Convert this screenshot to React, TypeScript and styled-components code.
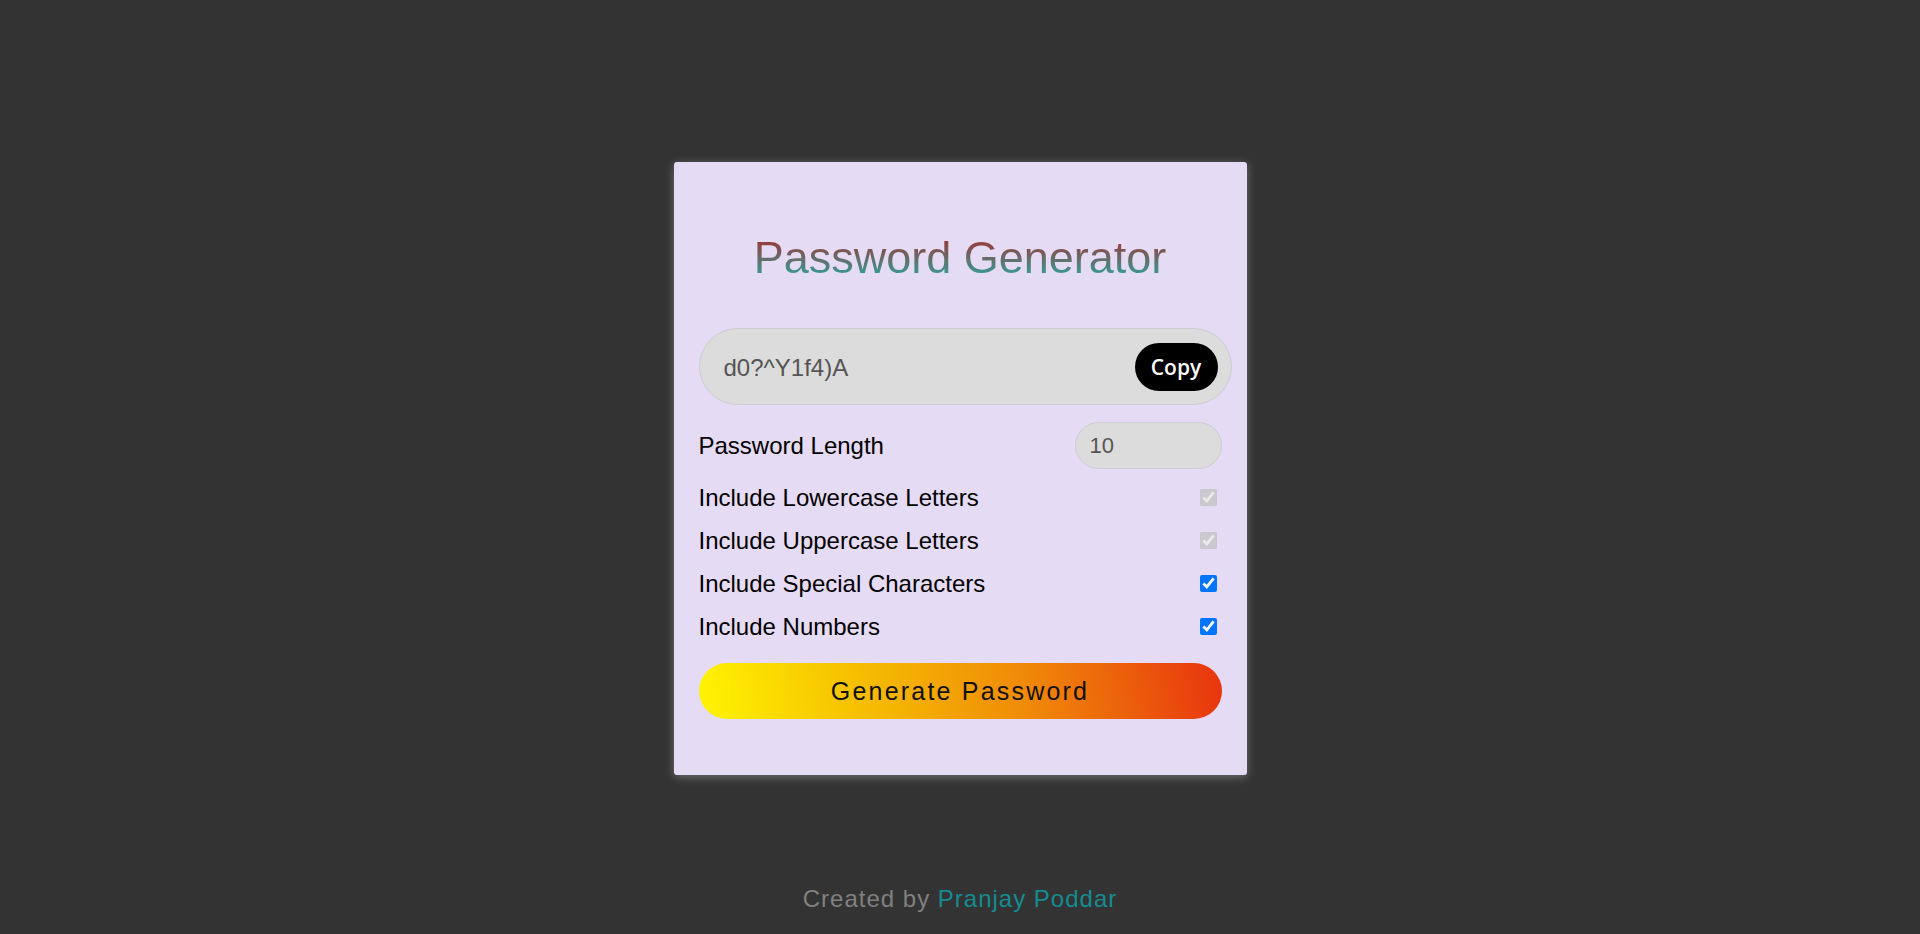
import React, { useState } from "react";
import styled, { createGlobalStyle } from "styled-components";

const Global = createGlobalStyle`
  html, body { margin: 0; padding: 0; }
  body {
    background: #333333;
    font-family: "Liberation Sans", Arial, sans-serif;
    min-height: 934px;
  }
  * { box-sizing: border-box; }
`;

const Page = styled.div`
  min-height: 934px;
  display: flex;
  flex-direction: column;
  align-items: center;
  padding-top: 162px;
`;

const Card = styled.div`
  width: 573px;
  height: 613px;
  background: #e6dbf5;
  border-radius: 3px;
  box-shadow: 0 2px 10px rgba(255, 255, 255, 0.3);
  padding: 0 25px;
  display: flex;
  flex-direction: column;
`;

const Title = styled.h1`
  margin: 70px 0 0;
  font-size: 45px;
  line-height: 51px;
  font-weight: 400;
  text-align: center;
  background: linear-gradient(to bottom, #b02222, #20b2aa);
  -webkit-background-clip: text;
  background-clip: text;
  color: transparent;
`;

const ResultField = styled.div`
  margin-top: 45px;
  margin-right: -10px;
  height: 77px;
  border-radius: 40px;
  background: #dcdcdc;
  border: 1px solid #cfcbd3;
  display: flex;
  align-items: center;
  justify-content: space-between;
  padding: 0 13px 0 24px;
`;

const ResultText = styled.span`
  font-size: 24px;
  color: #555;
  padding-top: 2px;
`;

const CopyButton = styled.button`
  width: 83px;
  height: 48px;
  border: none;
  border-radius: 24px;
  background: #000;
  color: #fff;
  font-family: "Open Sans", sans-serif;
  font-weight: 600;
  font-size: 21px;
  cursor: pointer;
  padding: 0;
`;

const LengthRow = styled.div`
  margin-top: 17px;
  height: 47px;
  display: flex;
  align-items: center;
  justify-content: space-between;
`;

const Label = styled.span`
  font-size: 24px;
  color: #000;
`;

const NumberBox = styled.div`
  width: 147px;
  height: 47px;
  border-radius: 24px;
  background: #dcdcdc;
  border: 1px solid #cfcbd3;
  display: flex;
  align-items: center;
  padding-left: 14px;
  font-size: 22px;
  color: #555;
`;

const OptionList = styled.div`
  margin-top: 7px;
  display: flex;
  flex-direction: column;
`;

const OptionRow = styled.label`
  height: 43px;
  display: flex;
  align-items: center;
  justify-content: space-between;
`;

const Check = styled.input`
  width: 17px;
  height: 17px;
  margin: 0 5px 0 0;
`;

const GenerateButton = styled.button`
  margin-top: 15px;
  height: 56px;
  border: none;
  border-radius: 28px;
  background: linear-gradient(80deg, #fff500 0%, #f6c000 30%, #f08a08 62%, #e8340f 100%);
  font-family: "Liberation Sans", Arial, sans-serif;
  font-size: 25px;
  letter-spacing: 2.2px;
  color: #111;
  cursor: pointer;
`;

const Footer = styled.p`
  margin: 110px 0 0;
  font-size: 24px;
  letter-spacing: 1px;
  color: #808080;
`;

const Author = styled.span`
  color: #148c91;
`;

const options = [
  { label: "Include Lowercase Letters", checked: true, disabled: true },
  { label: "Include Uppercase Letters", checked: true, disabled: true },
  { label: "Include Special Characters", checked: true, disabled: false },
  { label: "Include Numbers", checked: true, disabled: false },
];

export default function App() {
  const [state, setState] = useState(options.map((o) => o.checked));
  return (
    <>
      <Global />
      <Page>
        <Card>
          <Title>Password Generator</Title>
          <ResultField>
            <ResultText>d0?^Y1f4)A</ResultText>
            <CopyButton>Copy</CopyButton>
          </ResultField>
          <LengthRow>
            <Label>Password Length</Label>
            <NumberBox>10</NumberBox>
          </LengthRow>
          <OptionList>
            {options.map((o, i) => (
              <OptionRow key={o.label}>
                <Label>{o.label}</Label>
                <Check
                  type="checkbox"
                  checked={state[i]}
                  disabled={o.disabled}
                  onChange={() =>
                    setState((s) => s.map((v, j) => (j === i ? !v : v)))
                  }
                />
              </OptionRow>
            ))}
          </OptionList>
          <GenerateButton>Generate Password</GenerateButton>
        </Card>
        <Footer>
          Created by <Author>Pranjay Poddar</Author>
        </Footer>
      </Page>
    </>
  );
}
